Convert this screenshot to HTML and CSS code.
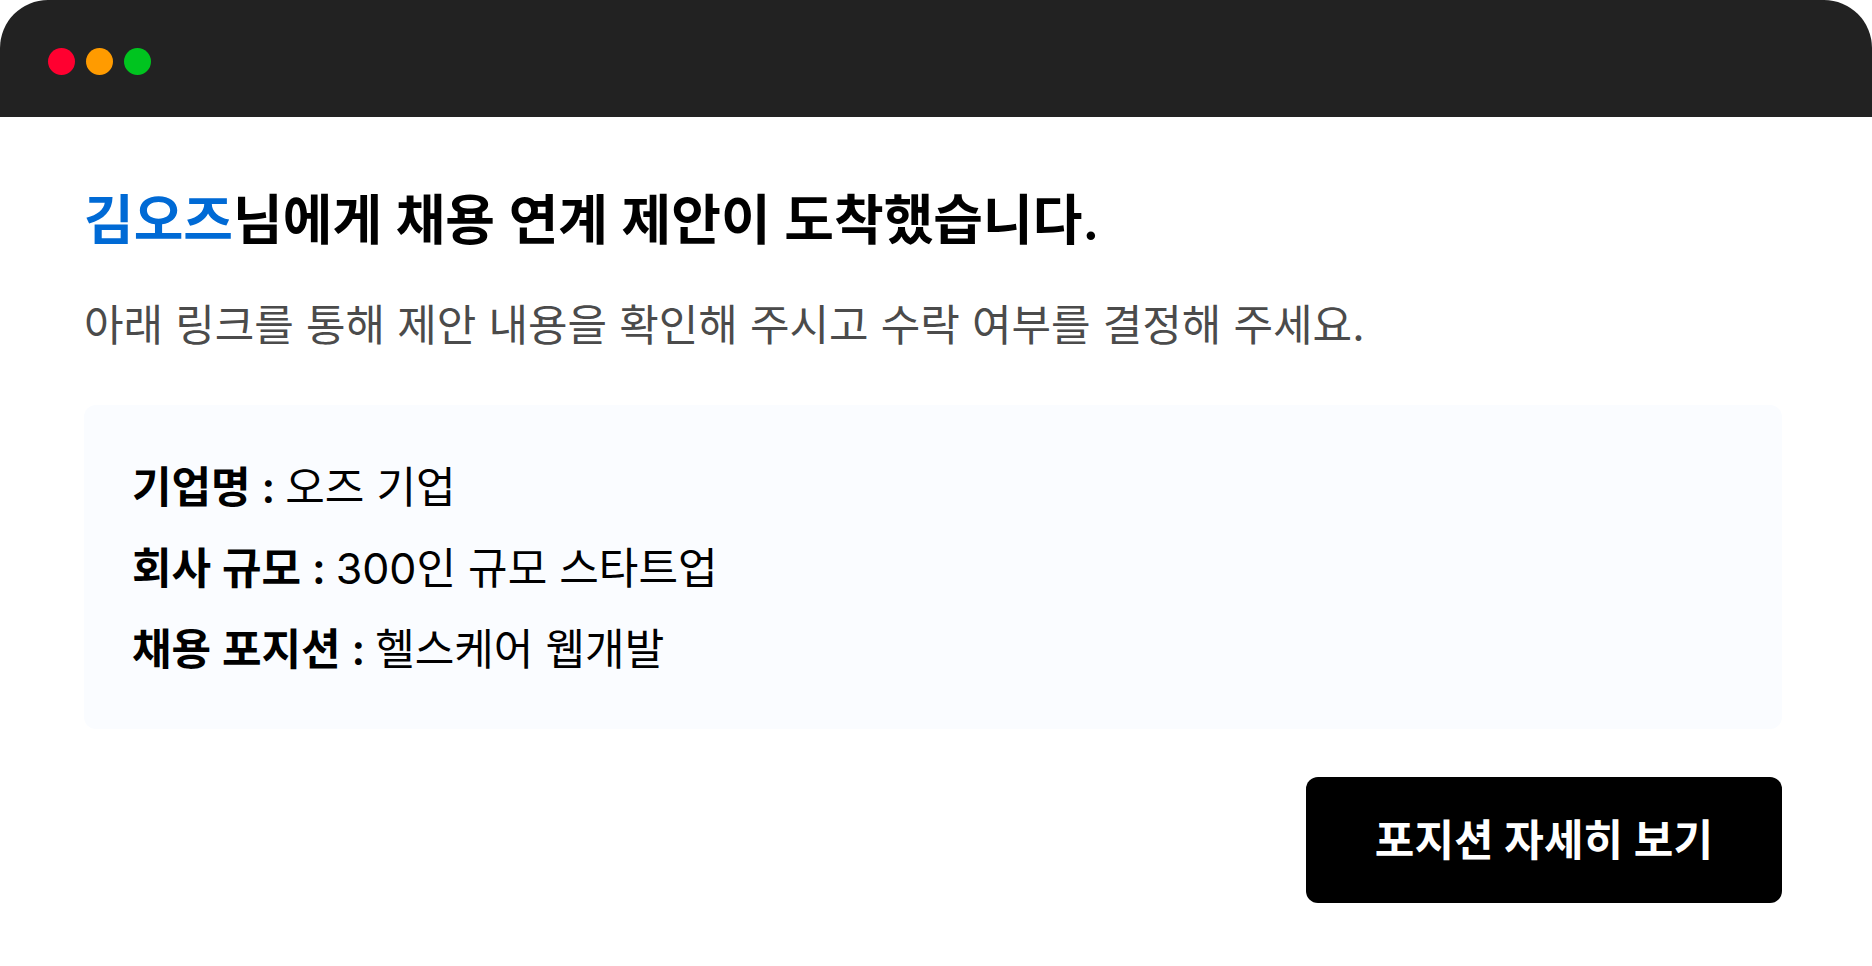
FILE: index.html
```html
<!DOCTYPE html>
<html lang="ko">
<head>
<meta charset="utf-8">
<title>채용 연계 제안</title>
<link rel="stylesheet" href="styles.css">
</head>
<body>
<div class="window">
  <header class="titlebar">
    <span class="dot dot-close"></span>
    <span class="dot dot-minimize"></span>
    <span class="dot dot-zoom"></span>
  </header>
  <main class="content">
    <h1 class="title"><span class="name">김오즈</span>님에게 채용 연계 제안이 도착했습니다.</h1>
    <p class="lead">아래 링크를 통해 제안 내용을 확인해 주시고 수락 여부를 결정해 주세요.</p>
    <dl class="details">
      <div class="row"><dt>기업명 :</dt><dd>오즈 기업</dd></div>
      <div class="row"><dt>회사 규모 :</dt><dd>300인 규모 스타트업</dd></div>
      <div class="row"><dt>채용 포지션 :</dt><dd>헬스케어 웹개발</dd></div>
    </dl>
    <button class="action" type="button">포지션 자세히 보기</button>
  </main>
</div>
</body>
</html>
```
FILE: styles.css
```css
* { box-sizing: border-box; }

body {
  margin: 0;
  background: #fff;
  color: #000;
  font-family: Inter, "Noto Sans CJK KR", sans-serif;
}

.window {
  min-height: 100vh;
  border-radius: 48px 48px 0 0;
  overflow: hidden;
  background: #fff;
}

.titlebar {
  display: flex;
  align-items: center;
  gap: 11px;
  padding: 48px 48px 42px;
  background: #222;
}

.dot {
  width: 27px;
  height: 27px;
  border-radius: 50%;
}

.dot-close { background: #ff0030; }
.dot-minimize { background: #ff9b00; }
.dot-zoom { background: #00c41f; }

.content {
  display: flex;
  flex-direction: column;
  padding: 62px 90px 60px 84px;
}

.title {
  margin: 0;
  font-size: 54px;
  font-weight: 600;
  line-height: 84px;
}

.name { color: #006ad5; }

.lead {
  margin: 26px 0 0;
  color: #4b4b4b;
  font-size: 43px;
  line-height: 72px;
}

.details {
  margin: 44px 0 0;
  padding: 42px 48px 39px;
  border-radius: 12px;
  background: #fafcff;
  font-size: 43px;
  line-height: 81px;
}

.row {
  display: flex;
  gap: 10px;
}

dt { font-weight: 600; }
dd { margin: 0; }

.action {
  align-self: flex-end;
  margin-top: 48px;
  padding: 30px 69px;
  border: 0;
  border-radius: 12px;
  background: #000;
  color: #fff;
  font: 600 43px/66px Inter, "Noto Sans CJK KR", sans-serif;
}
```
